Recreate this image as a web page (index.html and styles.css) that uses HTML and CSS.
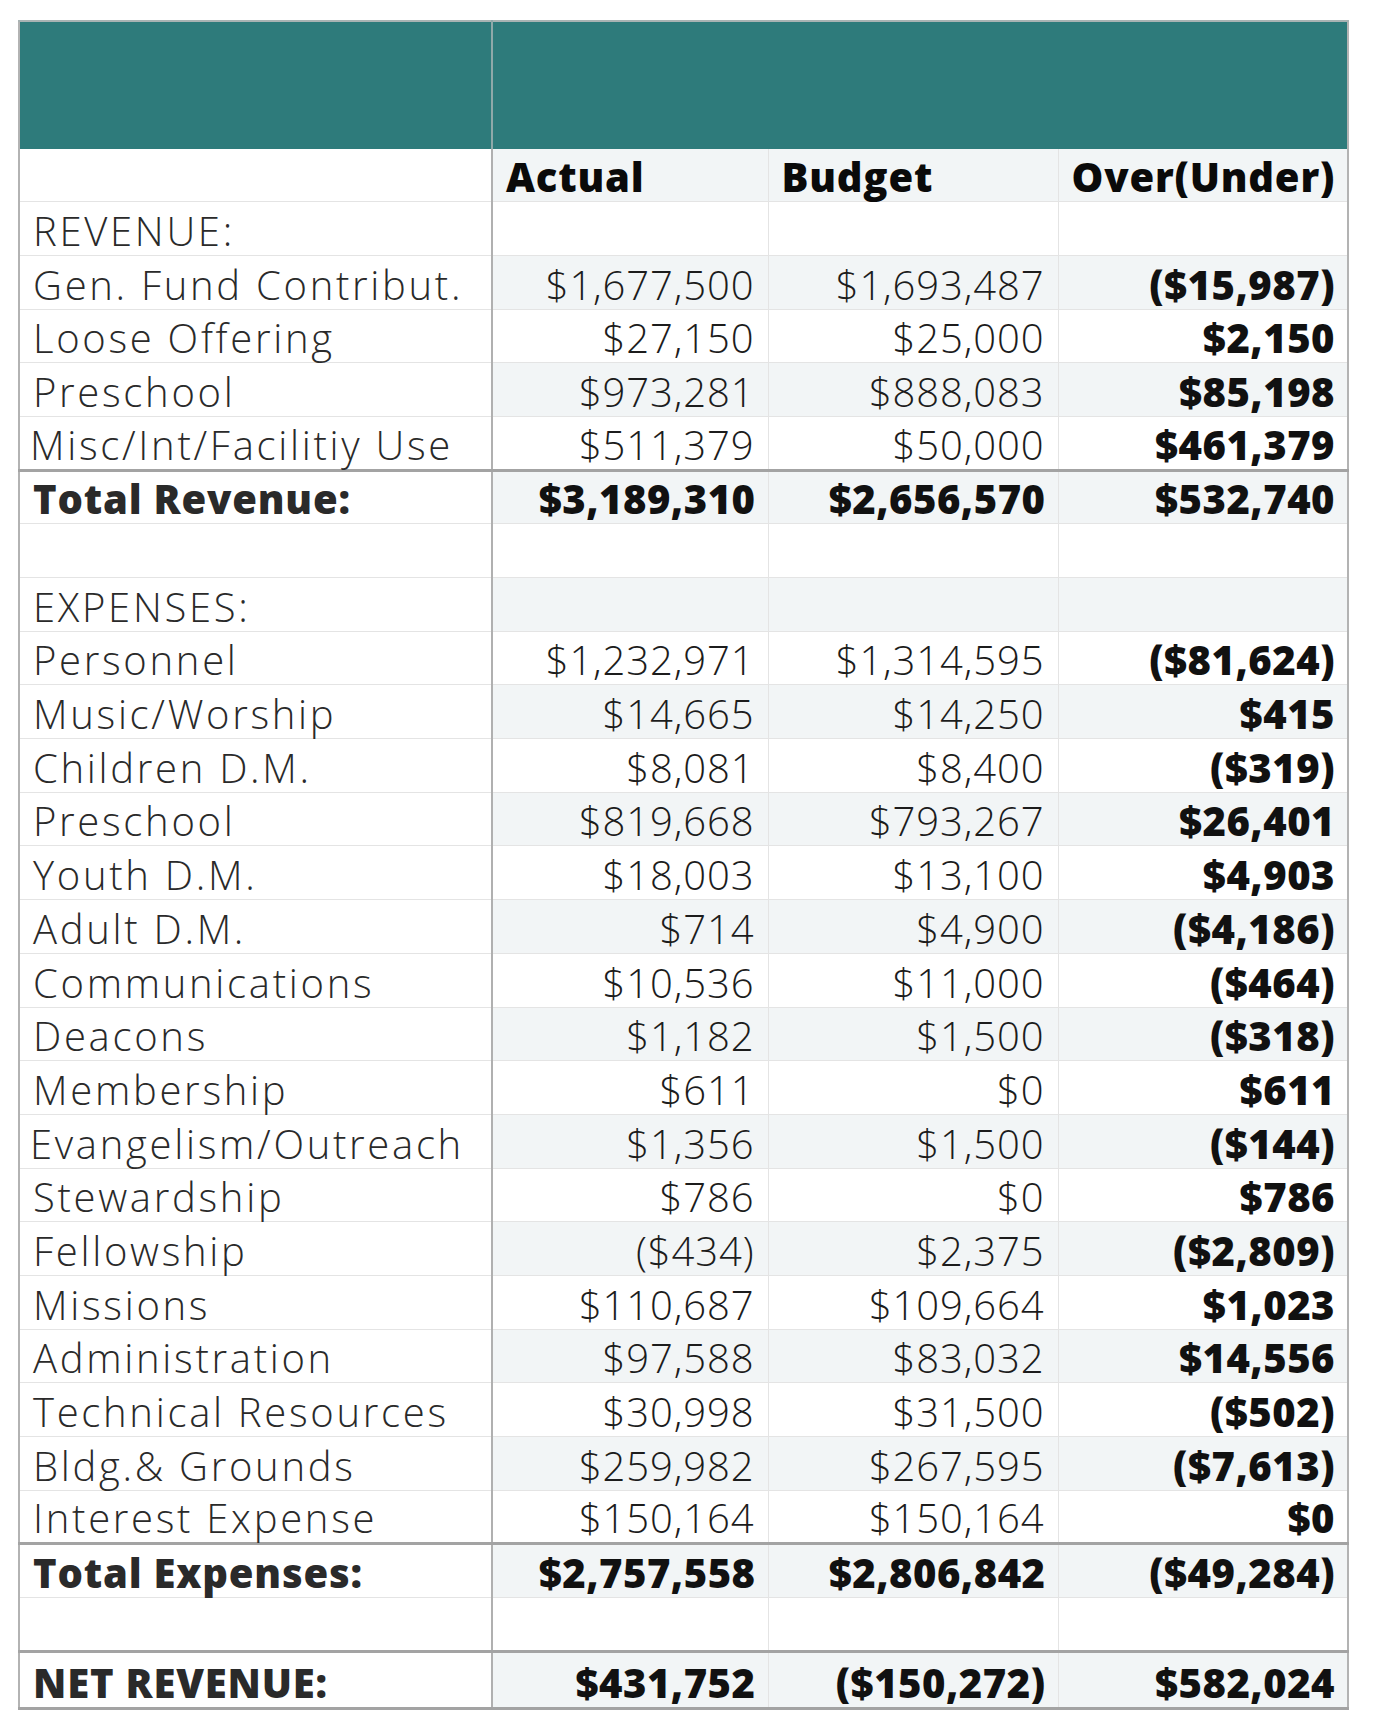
FILE: index.html
```html
<!DOCTYPE html>
<html lang="en">
<head>
<meta charset="utf-8">
<title>Revenue and Expenses</title>
<link rel="stylesheet" href="styles.css">
</head>
<body>
<table class="sheet">
  <colgroup>
    <col class="c-label">
    <col class="c-actual">
    <col class="c-budget">
    <col class="c-over">
  </colgroup>
  <tbody>
    <tr class="banner"><td class="label"></td><td colspan="3"></td></tr>
    <tr class="head shade"><td class="label"></td><td class="num hd">Actual</td><td class="num hd">Budget</td><td class="num hd">Over(Under)</td></tr>
    <tr><td class="label">REVENUE:</td><td class="num"></td><td class="num"></td><td class="num"></td></tr>
    <tr class="shade"><td class="label">Gen. Fund Contribut.</td><td class="num">$1,677,500</td><td class="num">$1,693,487</td><td class="num b">($15,987)</td></tr>
    <tr><td class="label">Loose Offering</td><td class="num">$27,150</td><td class="num">$25,000</td><td class="num b">$2,150</td></tr>
    <tr class="shade"><td class="label">Preschool</td><td class="num">$973,281</td><td class="num">$888,083</td><td class="num b">$85,198</td></tr>
    <tr><td class="label tight">Misc/Int/Facilitiy Use</td><td class="num">$511,379</td><td class="num">$50,000</td><td class="num b">$461,379</td></tr>
    <tr class="shade total"><td class="label b">Total Revenue:</td><td class="num b">$3,189,310</td><td class="num b">$2,656,570</td><td class="num b">$532,740</td></tr>
    <tr><td class="label"></td><td class="num"></td><td class="num"></td><td class="num"></td></tr>
    <tr class="shade"><td class="label">EXPENSES:</td><td class="num"></td><td class="num"></td><td class="num"></td></tr>
    <tr><td class="label">Personnel</td><td class="num">$1,232,971</td><td class="num">$1,314,595</td><td class="num b">($81,624)</td></tr>
    <tr class="shade"><td class="label">Music/Worship</td><td class="num">$14,665</td><td class="num">$14,250</td><td class="num b">$415</td></tr>
    <tr><td class="label">Children D.M.</td><td class="num">$8,081</td><td class="num">$8,400</td><td class="num b">($319)</td></tr>
    <tr class="shade"><td class="label">Preschool</td><td class="num">$819,668</td><td class="num">$793,267</td><td class="num b">$26,401</td></tr>
    <tr><td class="label">Youth D.M.</td><td class="num">$18,003</td><td class="num">$13,100</td><td class="num b">$4,903</td></tr>
    <tr class="shade"><td class="label">Adult D.M.</td><td class="num">$714</td><td class="num">$4,900</td><td class="num b">($4,186)</td></tr>
    <tr><td class="label">Communications</td><td class="num">$10,536</td><td class="num">$11,000</td><td class="num b">($464)</td></tr>
    <tr class="shade"><td class="label">Deacons</td><td class="num">$1,182</td><td class="num">$1,500</td><td class="num b">($318)</td></tr>
    <tr><td class="label">Membership</td><td class="num">$611</td><td class="num">$0</td><td class="num b">$611</td></tr>
    <tr class="shade"><td class="label tight">Evangelism/Outreach</td><td class="num">$1,356</td><td class="num">$1,500</td><td class="num b">($144)</td></tr>
    <tr><td class="label">Stewardship</td><td class="num">$786</td><td class="num">$0</td><td class="num b">$786</td></tr>
    <tr class="shade"><td class="label">Fellowship</td><td class="num">($434)</td><td class="num">$2,375</td><td class="num b">($2,809)</td></tr>
    <tr><td class="label">Missions</td><td class="num">$110,687</td><td class="num">$109,664</td><td class="num b">$1,023</td></tr>
    <tr class="shade"><td class="label">Administration</td><td class="num">$97,588</td><td class="num">$83,032</td><td class="num b">$14,556</td></tr>
    <tr><td class="label">Technical Resources</td><td class="num">$30,998</td><td class="num">$31,500</td><td class="num b">($502)</td></tr>
    <tr class="shade"><td class="label">Bldg.&amp; Grounds</td><td class="num">$259,982</td><td class="num">$267,595</td><td class="num b">($7,613)</td></tr>
    <tr><td class="label">Interest Expense</td><td class="num">$150,164</td><td class="num">$150,164</td><td class="num b">$0</td></tr>
    <tr class="shade total"><td class="label b">Total Expenses:</td><td class="num b">$2,757,558</td><td class="num b">$2,806,842</td><td class="num b">($49,284)</td></tr>
    <tr><td class="label"></td><td class="num"></td><td class="num"></td><td class="num"></td></tr>
    <tr class="shade total net"><td class="label b">NET REVENUE:</td><td class="num b">$431,752</td><td class="num b">($150,272)</td><td class="num b">$582,024</td></tr>
  </tbody>
</table>
</body>
</html>
```

FILE: styles.css
```css
html, body {
  margin: 0;
  padding: 0;
  background: #ffffff;
}

body {
  font-family: "Open Sans", "Liberation Sans", sans-serif;
  color: #222222;
}

.sheet {
  margin: 20px 0 0 18px;
  border-collapse: collapse;
  table-layout: fixed;
  width: 1329px;
  border: 2px solid #b3b3b3;
}

.c-label { width: 473px; }
.c-actual { width: 276px; }
.c-budget { width: 290px; }
.c-over { width: 290px; }

.sheet tr {
  height: 53.7px;
}

.sheet td {
  padding: 0 13px 4px 13px;
  border: 1px solid #e4e4e4;
  font-size: 40px;
  line-height: 40px;
  font-weight: 300;
  white-space: nowrap;
  vertical-align: bottom;
}

.sheet td.label {
  text-align: left;
  color: #2a2a2a;
  border-right: 2.5px solid #b0b0b0;
  letter-spacing: 2.7px;
}

.sheet td.label.tight {
  padding-left: 10px;
}

.sheet td.num {
  text-align: right;
  color: #1c1c1c;
  letter-spacing: 0.9px;
}

.sheet tr.shade td.num {
  background: #f2f5f6;
}

.sheet td.b {
  font-weight: 800;
  letter-spacing: 0.5px;
  color: #111111;
}

.sheet td.num.b {
  padding-right: 12px;
}

.sheet td.label.b {
  color: #2a2a2a;
  letter-spacing: 0.8px;
}

.sheet td.hd {
  text-align: left;
  font-weight: 800;
  color: #0a0a0a;
  letter-spacing: 0.8px;
}

.sheet tr.banner {
  height: 127px;
}

.sheet tr.banner td {
  background: #2e7b7b;
  border-top: 2px solid #a9b3b3;
  border-bottom: 1px solid #2e7b7b;
}

.sheet tr.banner td.label {
  border-right: 2px solid #8fa9a9;
}

.sheet tr.total td {
  border-top: 3px solid #a3a3a3;
}

.sheet tr.net {
  height: 57px;
}

.sheet tr.net td {
  border-bottom: 3px solid #a3a3a3;
}
```
